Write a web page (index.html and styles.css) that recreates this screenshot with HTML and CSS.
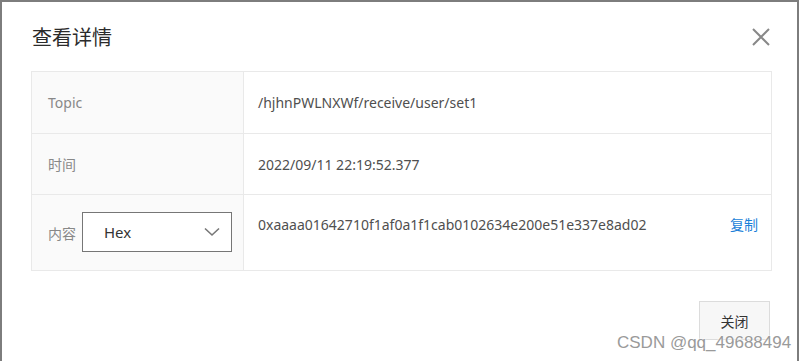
FILE: index.html
```html
<!DOCTYPE html>
<html lang="zh">
<head>
<meta charset="utf-8">
<title>查看详情</title>
<link rel="stylesheet" href="styles.css">
</head>
<body>
<div class="dialog">
  <div class="header">
    <div class="title">查看详情</div>
    <svg class="close" width="18" height="18" viewBox="0 0 18 18"><path d="M1 1 L17 17 M17 1 L1 17" stroke="#888" stroke-width="2" fill="none"/></svg>
  </div>
  <div class="table">
    <div class="row r1">
      <div class="label">Topic</div>
      <div class="value">/hjhnPWLNXWf/receive/user/set1</div>
    </div>
    <div class="row r2">
      <div class="label">时间</div>
      <div class="value">2022/09/11 22:19:52.377</div>
    </div>
    <div class="row r3">
      <div class="label">
        <span>内容</span>
        <div class="select">
          <span class="sel-text">Hex</span>
          <svg class="chev" width="16" height="10" viewBox="0 0 16 10"><path d="M1 1.5 L8 8 L15 1.5" stroke="#777" stroke-width="1.6" fill="none"/></svg>
        </div>
      </div>
      <div class="value top">
        <span>0xaaaa01642710f1af0a1f1cab0102634e200e51e337e8ad02</span>
        <a class="copy">复制</a>
      </div>
    </div>
  </div>
  <div class="footer">
    <button class="btn">关闭</button>
  </div>
</div>
<div class="watermark">CSDN @qq_49688494</div>
</body>
</html>
```
FILE: styles.css
```css
html, body {
  margin: 0;
  padding: 0;
  background: #fff;
  overflow: hidden;
}
body {
  font-family: "Noto Sans", "Noto Sans CJK SC", sans-serif;
  position: relative;
  width: 802px;
  height: 361px;
}
.dialog {
  box-sizing: border-box;
  width: 799px;
  height: 361px;
  border: 2px solid #7d7d7d;
  border-bottom: none;
  background: #fff;
}
.header {
  height: 69px;
  box-sizing: border-box;
  padding: 0 27px 0 30px;
  display: flex;
  align-items: center;
  justify-content: space-between;
}
.title {
  font-size: 20px;
  color: #2b2b2b;
  line-height: 26px;
  padding-top: 3px;
}
.close {
  display: block;
  margin-top: 1px;
}
.table {
  margin-left: 29px;
  width: 739px;
  border: 1px solid #e9e9e9;
  border-bottom: none;
}
.row {
  display: grid;
  grid-template-columns: 212px 1fr;
  border-bottom: 1px solid #e9e9e9;
  box-sizing: border-box;
}
.r1 { height: 62px; }
.r2 { height: 61px; }
.r3 { height: 76px; }
.label {
  background: #fafafa;
  border-right: 1px solid #e9e9e9;
  padding-left: 16px;
  display: flex;
  align-items: center;
  font-size: 14px;
  color: #888;
}
.label span {
  margin-right: 6px;
}
.value {
  display: flex;
  align-items: center;
  padding-left: 14px;
  padding-right: 13px;
  font-size: 14px;
  color: #4f4f4f;
}
.value.top {
  align-items: flex-start;
  padding-top: 19px;
  line-height: 22px;
  justify-content: space-between;
}
.copy {
  color: #1a7fd9;
  cursor: pointer;
}
.select {
  box-sizing: border-box;
  width: 150px;
  height: 40px;
  margin-top: -1px;
  border: 1px solid #767676;
  background: #fff;
  display: flex;
  align-items: center;
  justify-content: space-between;
  padding: 0 11px 0 21px;
}
.sel-text {
  font-size: 15px;
  color: #333;
}
.chev {
  display: block;
  margin-top: -1px;
}
.footer {
  display: flex;
  justify-content: flex-end;
  padding-right: 27px;
  margin-top: 30px;
}
.btn {
  width: 71px;
  height: 39px;
  box-sizing: border-box;
  background: #f7f7f7;
  border: 1px solid #dcdcdc;
  font-family: "Noto Sans CJK SC", sans-serif;
  font-size: 14px;
  color: #333;
  padding: 0;
}
.watermark {
  position: absolute;
  left: 617px;
  top: 333px;
  font-family: "Liberation Sans", Arial, sans-serif;
  font-size: 17px;
  color: #9a9a9a;
  text-shadow: 0 0 2px #fff, 0 0 2px #fff;
  white-space: nowrap;
}
```
